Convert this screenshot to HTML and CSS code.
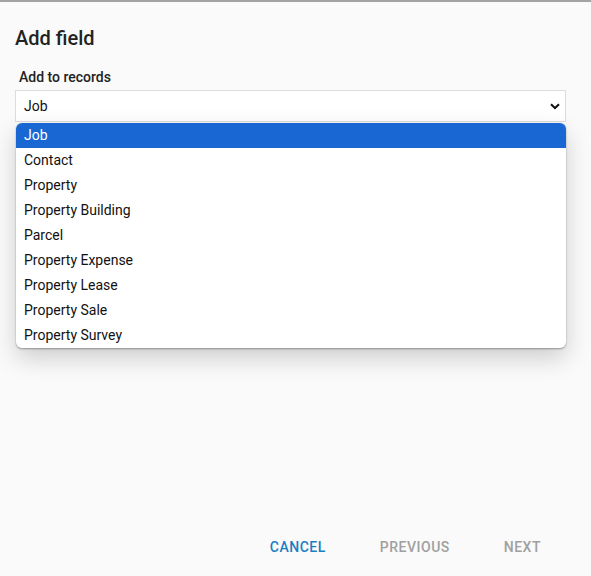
FILE: index.html
```html
<!DOCTYPE html>
<html lang="en">
<head>
    <meta charset="UTF-8">
    <meta name="viewport" content="width=device-width, initial-scale=1.0">
    <title>Add field</title>
    <link rel="stylesheet" href="styles.css">
</head>
<body>
    <div class="dialog">
        <h1 class="title">Add field</h1>
        <label class="field-label">Add to records</label>
        <div class="select-wrap">
            <div class="select">
                <span>Job</span>
                <svg class="chevron" width="10" height="7" viewBox="0 0 10 7">
                    <path d="M1 1.2 L5 5 L9 1.2" fill="none" stroke="#111" stroke-width="2"/>
                </svg>
            </div>
            <ul class="options">
                <li class="selected">Job</li>
                <li>Contact</li>
                <li>Property</li>
                <li>Property Building</li>
                <li>Parcel</li>
                <li>Property Expense</li>
                <li>Property Lease</li>
                <li>Property Sale</li>
                <li>Property Survey</li>
            </ul>
        </div>
        <div class="actions">
            <button class="btn primary">Cancel</button>
            <button class="btn" disabled>Previous</button>
            <button class="btn" disabled>Next</button>
        </div>
    </div>
</body>
</html>
```

FILE: styles.css
```css
html, body {
    margin: 0;
    height: 100%;
}
body {
    font-family: Roboto, Arial, sans-serif;
    background: #fafafa;
    color: #222;
}
.dialog {
    height: 100%;
    box-sizing: border-box;
    border-top: 2px solid #a3a3a3;
    padding: 0 25px 0 15px;
    display: flex;
    flex-direction: column;
}
.title {
    font-size: 20px;
    font-weight: 500;
    margin: 24px 0 0;
    line-height: 24px;
}
.field-label {
    display: block;
    font-size: 14px;
    font-weight: 500;
    margin: 19px 0 0 4px;
    line-height: 16px;
    color: #222;
}
.select-wrap {
    position: relative;
    margin-top: 5px;
}
.select {
    height: 32px;
    box-sizing: border-box;
    border: 1px solid #dcdcdc;
    background: #fff;
    display: flex;
    align-items: center;
    justify-content: space-between;
    padding: 0 5px 0 8px;
    font-size: 14px;
    color: #111;
}
.chevron {
    margin-top: 1px;
}
.options {
    position: absolute;
    top: 33px;
    left: 1px;
    right: 0;
    margin: 0;
    padding: 0;
    list-style: none;
    background: #fff;
    border-radius: 6px;
    overflow: hidden;
    box-shadow: 0 1px 2px rgba(0,0,0,0.35), 0 10px 24px rgba(0,0,0,0.18);
    z-index: 2;
}
.options li {
    height: 25px;
    line-height: 25px;
    padding-left: 8px;
    font-size: 14px;
    color: #111;
}
.options li.selected {
    background: #1967d2;
    color: #fff;
}
.actions {
    margin-top: auto;
    margin-bottom: 13px;
    display: flex;
    justify-content: flex-end;
}
.btn {
    background: none;
    border: none;
    font-family: Roboto, Arial, sans-serif;
    font-size: 14px;
    font-weight: 500;
    letter-spacing: 0.5px;
    text-transform: uppercase;
    padding: 8px 27px;
    color: #a0a0a0;
    cursor: pointer;
}
.btn.primary {
    color: #1a7ec3;
}
.btn:last-child {
    padding-right: 25px;
}
```
